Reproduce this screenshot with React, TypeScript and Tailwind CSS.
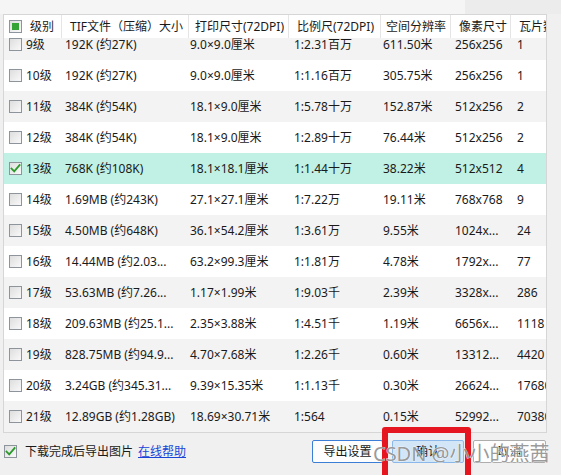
import React from 'react';

type Row = {
  level: string;
  size: string;
  print: string;
  scale: string;
  res: string;
  px: string;
  tiles: string;
  checked?: boolean;
};

const ROWS: Row[] = [
  { level: '9级', size: '192K (约27K)', print: '9.0×9.0厘米', scale: '1:2.31百万', res: '611.50米', px: '256x256', tiles: '1' },
  { level: '10级', size: '192K (约27K)', print: '9.0×9.0厘米', scale: '1:1.16百万', res: '305.75米', px: '256x256', tiles: '1' },
  { level: '11级', size: '384K (约54K)', print: '18.1×9.0厘米', scale: '1:5.78十万', res: '152.87米', px: '512x256', tiles: '2' },
  { level: '12级', size: '384K (约54K)', print: '18.1×9.0厘米', scale: '1:2.89十万', res: '76.44米', px: '512x256', tiles: '2' },
  { level: '13级', size: '768K (约108K)', print: '18.1×18.1厘米', scale: '1:1.44十万', res: '38.22米', px: '512x512', tiles: '4', checked: true },
  { level: '14级', size: '1.69MB (约243K)', print: '27.1×27.1厘米', scale: '1:7.22万', res: '19.11米', px: '768x768', tiles: '9' },
  { level: '15级', size: '4.50MB (约648K)', print: '36.1×54.2厘米', scale: '1:3.61万', res: '9.55米', px: '1024x...', tiles: '24' },
  { level: '16级', size: '14.44MB (约2.03...', print: '63.2×99.3厘米', scale: '1:1.81万', res: '4.78米', px: '1792x...', tiles: '77' },
  { level: '17级', size: '53.63MB (约7.26...', print: '1.17×1.99米', scale: '1:9.03千', res: '2.39米', px: '3328x...', tiles: '286' },
  { level: '18级', size: '209.63MB (约25.1...', print: '2.35×3.88米', scale: '1:4.51千', res: '1.19米', px: '6656x...', tiles: '1118' },
  { level: '19级', size: '828.75MB (约94.9...', print: '4.70×7.68米', scale: '1:2.26千', res: '0.60米', px: '13312...', tiles: '4420' },
  { level: '20级', size: '3.24GB (约345.31...', print: '9.39×15.35米', scale: '1:1.13千', res: '0.30米', px: '26624...', tiles: '17680' },
  { level: '21级', size: '12.89GB (约1.28GB)', print: '18.69×30.71米', scale: '1:564', res: '0.15米', px: '52992...', tiles: '70380' },
];

export default function App() {
  return (
    <div className="relative w-[561px] h-[475px] overflow-hidden bg-[#f0f0f0] text-[12px] text-[#1a1a1a] font-['Noto_Sans','Noto_Sans_CJK_SC',sans-serif]">
      {/* strip above the list */}
      <div className="flex h-[14px]">
        <div className="w-[465px] bg-[#f5f5f5]" />
        <div className="flex-1 bg-[#ececec]" />
      </div>

      {/* Table panel */}
      <div className="ml-[3px] flex h-[419px] w-[544px] flex-col overflow-hidden border border-[#d6d6d6] bg-white">
        <div className="flex h-[23px] shrink-0 items-center bg-white">
          <div className="flex w-[57px] shrink-0 items-center gap-[8px] pl-[5px]">
            <CheckBox state="partial" />
            <span>级别</span>
          </div>
          <HeadCell w="w-[127px]" pl="pl-[8px]">TIF文件（压缩）大小</HeadCell>
          <HeadCell w="w-[100px]" pl="pl-[6px]">打印尺寸(72DPI)</HeadCell>
          <HeadCell w="w-[92px]" pl="pl-[8px]">比例尺(72DPI)</HeadCell>
          <HeadCell w="w-[70px]" pl="pl-[5px]">空间分辨率</HeadCell>
          <HeadCell w="w-[60px]" pl="pl-[8px]">像素尺寸</HeadCell>
          <HeadCell w="w-[80px]" pl="pl-[8px]">瓦片数</HeadCell>
        </div>

        <div className="flex-1 overflow-hidden">
          <div className="-mt-[9px]">
            {ROWS.map((r, i) => (
              <TableRow key={r.level} row={r} odd={i % 2 === 0} />
            ))}
          </div>
        </div>
      </div>

      {/* Footer */}
      <div className="mt-[7px] flex h-[23px] items-center pl-[4px] pr-[15px]">
        <CheckBox state="checked" />
        <span className="ml-[8px]">下载完成后导出图片</span>
        <a href="#" className="ml-[5px] text-[#1a44d8] underline">
          在线帮助
        </a>
        <div className="ml-auto flex gap-[9px]">
          <button className="h-[23px] w-[71px] rounded-[2px] border border-[#3b7ed8] bg-[#fdfdfd]">导出设置</button>
          <button className="h-[23px] w-[72px] rounded-[2px] border border-[#8ab8ea] bg-[#d3e6f8]">确认</button>
          <button className="h-[23px] w-[73px] rounded-[2px] border border-[#adadad] bg-[#fdfdfd]">取消</button>
        </div>
      </div>

      {/* screenshot annotation + watermark */}
      <div className="absolute left-[382px] top-[427px] h-[54px] w-[89px] rounded-[3px] border-[6px] border-[#e5161f]" />
      <div className="pointer-events-none absolute left-[373px] top-[442px] whitespace-nowrap text-[20px] leading-[24px] text-[#8e8e8e]/90 [-webkit-text-stroke:0.6px_#ffffff] [paint-order:stroke_fill]">
        CSDN @小小的燕茜
      </div>
    </div>
  );
}

function HeadCell({ w, pl, children }: { w: string; pl: string; children: React.ReactNode }) {
  return (
    <div className={`${w} ${pl} flex h-full shrink-0 items-center overflow-hidden whitespace-nowrap border-l border-[#e5e5e5]`}>
      {children}
    </div>
  );
}

function TableRow({ row, odd }: { row: Row; odd: boolean }) {
  const bg = row.checked ? 'bg-[#c1f0e4]' : odd ? 'bg-[#f3f3f3]' : 'bg-white';
  return (
    <div className={`flex h-[31px] items-center whitespace-nowrap ${bg}`}>
      <div className="flex w-[57px] shrink-0 items-center gap-[4px] pl-[5px]">
        <CheckBox state={row.checked ? 'checked' : 'off'} />
        <span>{row.level}</span>
      </div>
      <div className="w-[127px] shrink-0 overflow-hidden pl-[4px]">{row.size}</div>
      <div className="w-[100px] shrink-0 overflow-hidden pl-[2px]">{row.print}</div>
      <div className="w-[92px] shrink-0 overflow-hidden pl-[6px]">{row.scale}</div>
      <div className="w-[70px] shrink-0 overflow-hidden pl-[3px]">{row.res}</div>
      <div className="w-[60px] shrink-0 overflow-hidden pl-[5px]">{row.px}</div>
      <div className="w-[80px] shrink-0 overflow-hidden pl-[7px]">{row.tiles}</div>
    </div>
  );
}

function CheckBox({ state }: { state: 'off' | 'checked' | 'partial' }) {
  return (
    <span className="relative flex h-[13px] w-[13px] shrink-0 items-center justify-center border border-[#8d949b] bg-gradient-to-br from-[#dedede] to-[#f9f9f9]">
      {state === 'partial' && <span className="h-[7px] w-[7px] bg-[#36a336]" />}
      {state === 'checked' && (
        <svg width="11" height="11" viewBox="0 0 11 11" className="absolute">
          <path d="M1.5 5.6 L4.2 8.4 L9.6 2" fill="none" stroke="#2b9a2b" strokeWidth="1.8" strokeLinecap="square" />
        </svg>
      )}
    </span>
  );
}
